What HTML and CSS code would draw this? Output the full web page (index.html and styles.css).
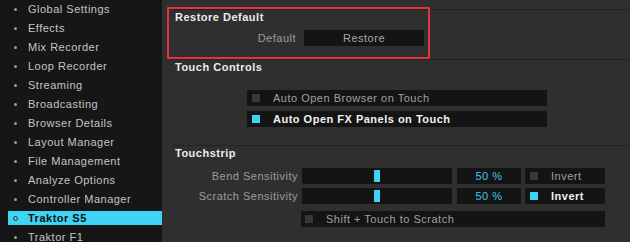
FILE: index.html
```html
<!DOCTYPE html>
<html lang="en">
<head>
  <meta charset="UTF-8">
  <title>Preferences</title>
  <link rel="stylesheet" href="styles.css">
</head>
<body>
  <div class="window">
    <!-- Sidebar -->
    <ul class="nav">
      <li>Global Settings</li>
      <li>Effects</li>
      <li>Mix Recorder</li>
      <li>Loop Recorder</li>
      <li>Streaming</li>
      <li>Broadcasting</li>
      <li>Browser Details</li>
      <li>Layout Manager</li>
      <li>File Management</li>
      <li>Analyze Options</li>
      <li>Controller Manager</li>
      <li class="active">Traktor S5</li>
      <li>Traktor F1</li>
    </ul>

    <!-- Settings -->
    <div class="content">
      <div class="section restore-section">
        <h2>Restore Default</h2>
        <div class="restore-row">
          <span class="label">Default</span>
          <div class="button">Restore</div>
        </div>
        <div class="highlight"></div>
      </div>

      <div class="section touch-section">
        <h2>Touch Controls</h2>
        <div class="check-list">
          <div class="check"><span class="box"></span>Auto Open Browser on Touch</div>
          <div class="check on"><span class="box"></span>Auto Open FX Panels on Touch</div>
        </div>
      </div>

      <div class="section strip-section">
        <h2>Touchstrip</h2>
        <div class="strip-grid">
          <span class="label">Bend Sensitivity</span>
          <div class="slider"><span class="handle"></span></div>
          <div class="value">50 %</div>
          <div class="check"><span class="box"></span>Invert</div>

          <span class="label">Scratch Sensitivity</span>
          <div class="slider"><span class="handle"></span></div>
          <div class="value">50 %</div>
          <div class="check on"><span class="box"></span>Invert</div>

          <div class="check wide"><span class="box"></span>Shift + Touch to Scratch</div>
        </div>
      </div>
    </div>
  </div>
</body>
</html>
```

FILE: styles.css
```css
body {
  margin: 0;
  padding: 0;
  background-color: #2f2f2f;
  font-family: "Liberation Sans", Arial, sans-serif;
  font-size: 11px;
  letter-spacing: 0.5px;
  color: #a8a8a8;
}

.window {
  display: flex;
  width: 630px;
  height: 242px;
  overflow: hidden;
}

/* Sidebar */

.nav {
  list-style: none;
  margin: 0;
  padding: 2px 0 0 8px;
  width: 154px;
  flex-shrink: 0;
  background-color: #161616;
}

.nav li {
  position: relative;
  height: 14px;
  line-height: 14px;
  margin-bottom: 5px;
  padding-left: 20px;
  color: #c4c4c4;
}

.nav li::before {
  content: "";
  position: absolute;
  left: 6px;
  top: 6px;
  width: 3px;
  height: 3px;
  border-radius: 50%;
  background-color: #9a9a9a;
}

.nav li.active {
  background-color: #3fd3f6;
  color: #111;
  font-weight: bold;
}

.nav li.active::before {
  left: 5px;
  top: 5px;
  width: 3px;
  height: 3px;
  background: none;
  border: 1px solid #333;
}

/* Content */

.content {
  flex: 1;
  padding: 9px 0 0 10px;
}

.section {
  position: relative;
  border-top: 1px solid #222;
  padding-left: 3px;
}

h2 {
  margin: 0;
  font-size: 11px;
  line-height: 14px;
  font-weight: bold;
  color: #ececec;
}

.label {
  text-align: right;
  color: #9c9c9c;
}

.restore-section {
  height: 49px;
}

.restore-row {
  display: flex;
  align-items: center;
  margin-top: 6px;
}

.restore-row .label {
  width: 121px;
}

.button {
  margin-left: 8px;
  width: 120px;
  height: 16px;
  line-height: 16px;
  text-align: center;
  background-color: #141414;
  color: #a8a8a8;
}

.highlight {
  position: absolute;
  left: -5px;
  top: -3px;
  width: 259px;
  height: 48px;
  border: 2px solid #e5323e;
  border-radius: 1px;
}

.touch-section {
  height: 85px;
}

.check-list {
  display: flex;
  flex-direction: column;
  gap: 5px;
  margin: 16px 0 0 72px;
  width: 300px;
}

.check {
  display: flex;
  align-items: center;
  height: 16px;
  background-color: #141414;
  color: #a0a0a0;
}

.check .box {
  width: 8px;
  height: 8px;
  margin: 0 13px 0 5px;
  background-color: #383838;
}

.check.on {
  color: #f2f2f2;
  font-weight: bold;
}

.check.on .box {
  background-color: #3fd3f6;
}

.strip-section {
  padding-top: 0;
}

.strip-grid {
  display: grid;
  grid-template-columns: 126px 150px 65px 80px;
  grid-auto-rows: 16px;
  column-gap: 4px;
  row-gap: 4px;
  margin: 8px 0 0 -3px;
}

.strip-grid .label {
  line-height: 16px;
}

.slider {
  position: relative;
  background-color: #141414;
}

.handle {
  position: absolute;
  left: 72px;
  top: 2px;
  width: 6px;
  height: 12px;
  background-color: #3fd3f6;
}

.value {
  margin-left: 1px;
  line-height: 16px;
  text-align: center;
  background-color: #141414;
  color: #3ec6ee;
}

.check.wide {
  grid-column: 2 / 5;
  margin-top: 3px;
  margin-left: -1px;
}

.check.wide .box {
  margin-right: 13px;
  margin-left: 4px;
}
```
